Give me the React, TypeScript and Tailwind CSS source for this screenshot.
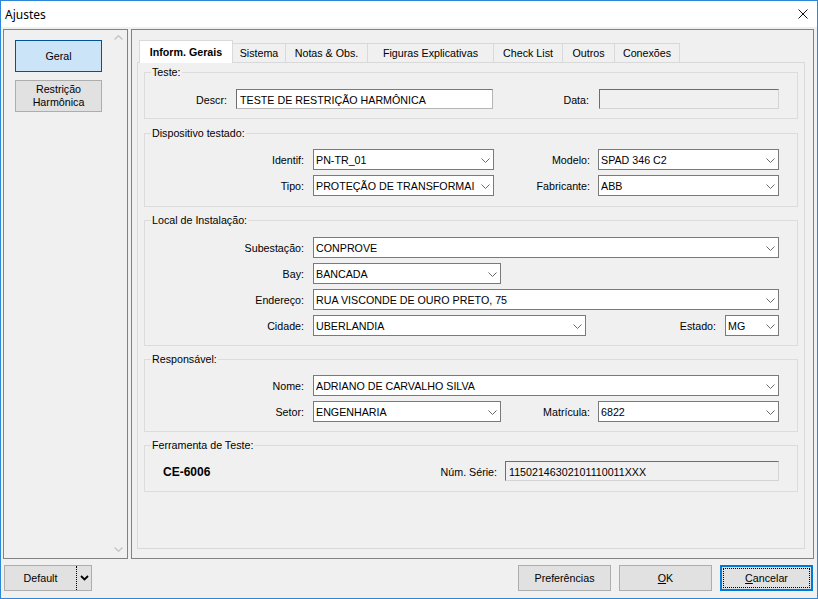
import React from 'react';

type BoxProps = { value?: string; className: string };

const ComboArrow = () => (
  <svg width="9" height="5" viewBox="0 0 9 5" className="shrink-0">
    <polyline points="0.5,0.5 4.5,4.5 8.5,0.5" fill="none" stroke="#6a6a6a" strokeWidth="1" />
  </svg>
);

const Combo: React.FC<BoxProps> = ({ value = '', className }) => (
  <div className={`flex h-[21px] shrink-0 items-center border border-[#7a7a7a] bg-white pt-[2px] pl-[2px] pr-[3px] ${className}`}>
    <span className="min-w-0 flex-1 overflow-hidden whitespace-nowrap pr-[2px]">{value}</span>
    <ComboArrow />
  </div>
);

const TextBox: React.FC<BoxProps & { readOnly?: boolean }> = ({ value = '', className, readOnly }) => (
  <div
    className={`flex h-[20px] shrink-0 items-center overflow-hidden whitespace-nowrap border pt-[2px] pl-[3px] ${
      readOnly
        ? 'border-t-[#6d6d6d] border-l-[#6d6d6d] border-r-[#d4d4d4] border-b-[#d4d4d4] bg-[#f0f0f0]'
        : 'border-t-[#7a7a7a] border-l-[#6d6d6d] border-r-[#b5b5b5] border-b-[#b5b5b5] bg-white'
    } ${className}`}
  >
    {value}
  </div>
);

const Group: React.FC<{ title: string; className: string; children: React.ReactNode }> = ({ title, className, children }) => (
  <fieldset className={`w-[654px] border border-[#dcdcdc] ${className}`}>
    <legend className="ml-[6px] px-[1px] leading-[14px]">{title}</legend>
    {children}
  </fieldset>
);

const tabs = [
  { label: 'Sistema', w: 'w-[54px]' },
  { label: 'Notas & Obs.', w: 'w-[83px]' },
  { label: 'Figuras Explicativas', w: 'w-[127px]' },
  { label: 'Check List', w: 'w-[70px]' },
  { label: 'Outros', w: 'w-[53px]' },
  { label: 'Conexões', w: 'w-[66px]' },
];

const Chevron = ({ up }: { up?: boolean }) => (
  <svg width="9" height="5" viewBox="0 0 9 5">
    <polyline
      points={up ? '0.5,4.5 4.5,0.8 8.5,4.5' : '0.5,0.5 4.5,4.2 8.5,0.5'}
      fill="none"
      stroke="#c4c4c4"
      strokeWidth="1.4"
    />
  </svg>
);

export default function App() {
  return (
    <div className="h-[599px] w-[818px] overflow-hidden border border-[#2d86d6] bg-[#f0f0f0] font-['Liberation_Sans',Arial,sans-serif] text-[10.7px] leading-[13px] text-black">
      {/* title bar */}
      <div className="flex h-[26px] items-center bg-white pl-[4px] pr-[9px]">
        <span className="flex-1 font-['Noto_Sans',sans-serif] text-[12px]">Ajustes</span>
        <svg width="10" height="10" viewBox="0 0 10 10">
          <path d="M0.5 0.5 L9.5 9.5 M9.5 0.5 L0.5 9.5" stroke="#111" strokeWidth="1" fill="none" />
        </svg>
      </div>

      <div className="mt-[2px] flex h-[530px] gap-[3px] pl-[2px] pr-[3px]">
        {/* left nav */}
        <div className="flex w-[125px] border border-[#828282]">
          <div className="flex flex-1 flex-col gap-[8px] pl-[11px] pt-[10px]">
            <div className="flex h-[32px] w-[87px] items-center justify-center border border-[#005499] bg-[#cce4f7]">Geral</div>
            <div className="flex h-[32px] w-[87px] items-center justify-center border border-[#adadad] bg-[#e1e1e1] text-center leading-[13px]">
              Restrição
              <br />
              Harmônica
            </div>
          </div>
          <div className="flex w-[17px] flex-col items-center justify-between pt-[5px] pb-[6px]">
            <Chevron up />
            <Chevron />
          </div>
        </div>

        {/* tabs */}
        <div className="flex flex-1 flex-col border border-[#828282] pt-[10px] pr-[8px] pb-[9px] pl-[5px]">
          <div className="flex h-[22px] items-end pl-[2px]">
            <div className="relative z-10 -mb-px flex h-[23px] w-[94px] items-start justify-center border border-b-0 border-[#d9d9d9] bg-white pt-[5px] font-bold">
              Inform. Gerais
            </div>
            {tabs.map(t => (
              <div key={t.label} className={`-ml-px flex h-[19px] items-center justify-center border border-b-0 border-[#d9d9d9] bg-[#f0f0f0] ${t.w}`}>
                {t.label}
              </div>
            ))}
          </div>

          <div className="flex-1 border border-[#d9d9d9] bg-[#f0f0f0] pl-[6px]">
            <Group title="Teste:" className="mt-[2px] pt-[10px] pb-[9px]">
              <div className="flex h-[20px] items-center">
                <span className="w-[91px] pt-[2px] pr-[9px] text-right">Descr:</span>
                <TextBox className="w-[257px]" value="TESTE DE RESTRIÇÃO HARMÔNICA" />
                <span className="w-[106px] pt-[2px] pr-[10px] text-right">Data:</span>
                <TextBox className="w-[180px]" readOnly />
              </div>
            </Group>

            <Group title="Dispositivo testado:" className="mt-[7px] pt-[9px] pb-[10px]">
              <div className="flex flex-col gap-[5px]">
                <div className="flex items-center">
                  <span className="w-[168px] pt-[2px] pr-[9px] text-right">Identif:</span>
                  <Combo className="w-[181px]" value="PN-TR_01" />
                  <span className="w-[104px] pt-[2px] pr-[8px] text-right">Modelo:</span>
                  <Combo className="w-[181px]" value="SPAD 346 C2" />
                </div>
                <div className="flex items-center">
                  <span className="w-[168px] pt-[2px] pr-[9px] text-right">Tipo:</span>
                  <Combo className="w-[181px]" value="PROTEÇÃO DE TRANSFORMAI" />
                  <span className="w-[104px] pt-[2px] pr-[8px] text-right">Fabricante:</span>
                  <Combo className="w-[181px]" value="ABB" />
                </div>
              </div>
            </Group>

            <Group title="Local de Instalação:" className="mt-[6px] pt-[10px] pb-[9px]">
              <div className="flex flex-col gap-[5px]">
                <div className="flex items-center">
                  <span className="w-[168px] pt-[2px] pr-[9px] text-right">Subestação:</span>
                  <Combo className="w-[466px]" value="CONPROVE" />
                </div>
                <div className="flex items-center">
                  <span className="w-[168px] pt-[2px] pr-[9px] text-right">Bay:</span>
                  <Combo className="w-[188px]" value="BANCADA" />
                </div>
                <div className="flex items-center">
                  <span className="w-[168px] pt-[2px] pr-[9px] text-right">Endereço:</span>
                  <Combo className="w-[466px]" value="RUA VISCONDE DE OURO PRETO, 75" />
                </div>
                <div className="flex items-center">
                  <span className="w-[168px] pt-[2px] pr-[9px] text-right">Cidade:</span>
                  <Combo className="w-[273px]" value="UBERLANDIA" />
                  <span className="w-[139px] pt-[2px] pr-[9px] text-right">Estado:</span>
                  <Combo className="w-[54px]" value="MG" />
                </div>
              </div>
            </Group>

            <Group title="Responsável:" className="mt-[6px] pt-[9px] pb-[9px]">
              <div className="flex flex-col gap-[5px]">
                <div className="flex items-center">
                  <span className="w-[168px] pt-[2px] pr-[9px] text-right">Nome:</span>
                  <Combo className="w-[466px]" value="ADRIANO DE CARVALHO SILVA" />
                </div>
                <div className="flex items-center">
                  <span className="w-[168px] pt-[2px] pr-[9px] text-right">Setor:</span>
                  <Combo className="w-[188px]" value="ENGENHARIA" />
                  <span className="w-[97px] pt-[2px] pr-[8px] text-right">Matrícula:</span>
                  <Combo className="w-[181px]" value="6822" />
                </div>
              </div>
            </Group>

            <Group title="Ferramenta de Teste:" className="mt-[6px] pt-[9px] pb-[10px]">
              <div className="flex h-[20px] items-center pr-[18px] pl-[18px]">
                <span className="flex-1 pt-[2px] text-[12px] font-bold">CE-6006</span>
                <span className="pt-[2px] pr-[8px]">Núm. Série:</span>
                <TextBox className="w-[274px]" readOnly value="11502146302101110011XXX" />
              </div>
            </Group>
          </div>
        </div>
      </div>

      {/* footer */}
      <div className="flex items-start pt-[6px] pr-[4px] pl-[3px]">
        <div className="flex h-[26px] w-[88px] border border-[#adadad] bg-[#e1e1e1]">
          <span className="flex w-[71px] items-center justify-center">Default</span>
          <span className="border-l border-dotted border-black" />
          <span className="flex flex-1 items-center justify-center">
            <svg width="9" height="6" viewBox="0 0 9 6">
              <polyline points="1,1 4.5,4.5 8,1" fill="none" stroke="#000" strokeWidth="1.8" />
            </svg>
          </span>
        </div>
        <div className="flex-1" />
        <div className="flex gap-[8px]">
          <button className="h-[26px] w-[93px] border border-[#adadad] bg-[#e1e1e1]">Preferências</button>
          <button className="h-[26px] w-[93px] border border-[#adadad] bg-[#e1e1e1]">
            <span className="underline">O</span>K
          </button>
          <button className="h-[26px] w-[93px] border border-[#0078d7] bg-[#e1e1e1] shadow-[inset_0_0_0_1px_#0078d7] outline-1 outline-offset-[-4px] outline-black outline-dotted">
            <span className="underline">C</span>ancelar
          </button>
        </div>
      </div>
    </div>
  );
}
